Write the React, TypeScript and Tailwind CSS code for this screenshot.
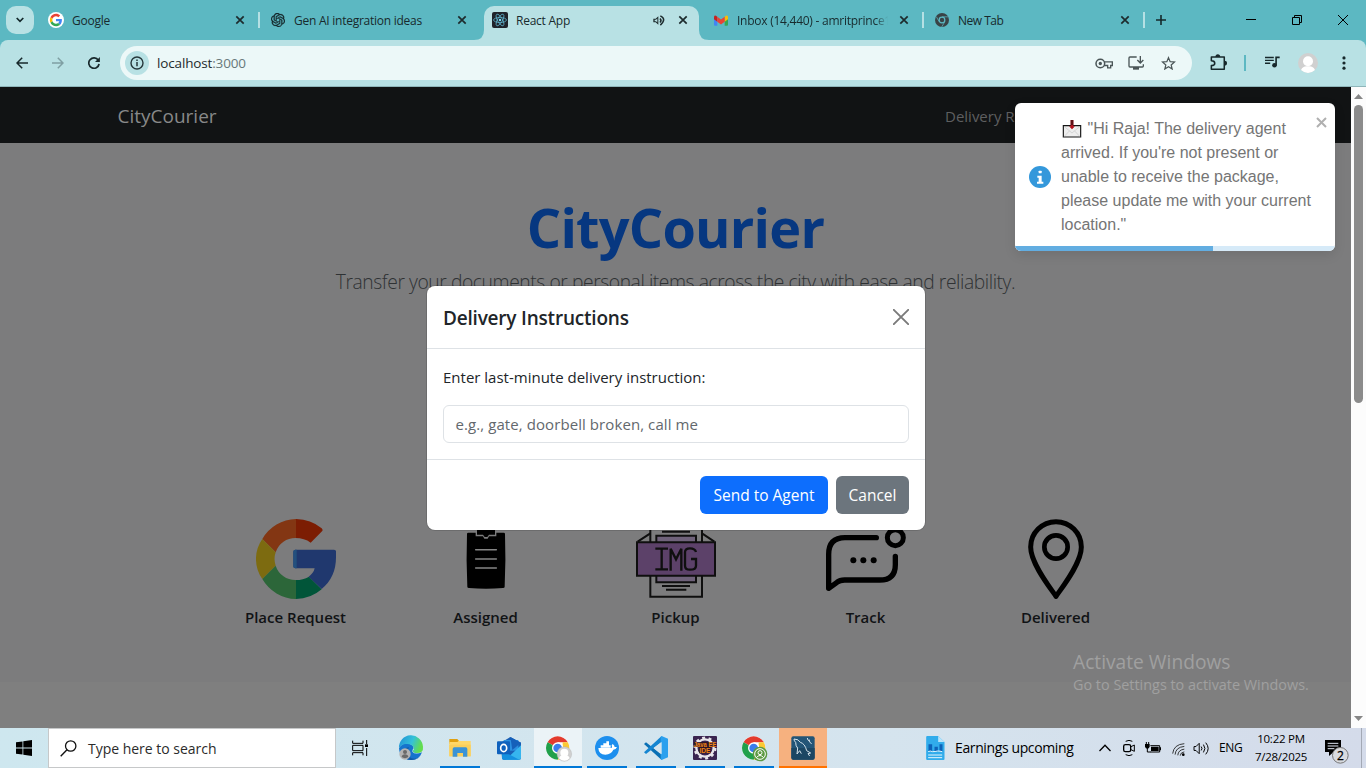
import React from "react";

type PicProps = { box: string; className: string; children: React.ReactNode };
const Pic = ({ box, className, children }: PicProps) => (
  <svg viewBox={box} className={`block shrink-0 ${className}`} fill="none">
    {children}
  </svg>
);

/* ---------- Browser chrome ---------- */

const Close = () => (
  <Pic box="0 0 10 10" className="size-[10px]">
    <path d="M1.3 1.3 8.7 8.7M8.7 1.3 1.3 8.7" stroke="#1d2b2d" strokeWidth="1.7" />
  </Pic>
);

const GoogleIcon = () => (
  <Pic box="0 0 48 48" className="size-4">
    <circle cx="24" cy="24" r="24" fill="#fff" />
    <g transform="translate(5.500 5.500) scale(.77)">
      <path fill="#EA4335" d="M24 9.5c3.54 0 6.71 1.22 9.21 3.6l6.85-6.85C35.9 2.38 30.47 0 24 0 14.62 0 6.51 5.38 2.56 13.22l7.98 6.19C12.43 13.72 17.74 9.5 24 9.5z" />
      <path fill="#4285F4" d="M46.98 24.55c0-1.57-.15-3.09-.38-4.55H24v9.02h12.94c-.58 2.96-2.26 5.48-4.78 7.18l7.73 6c4.51-4.18 7.09-10.36 7.09-17.65z" />
      <path fill="#FBBC05" d="M10.53 28.59c-.48-1.45-.76-2.99-.76-4.59s.27-3.14.76-4.59l-7.98-6.19C.92 16.46 0 20.12 0 24s.92 7.54 2.56 10.78l7.97-6.19z" />
      <path fill="#34A853" d="M24 48c6.48 0 11.93-2.13 15.89-5.81l-7.73-6c-2.15 1.45-4.92 2.3-8.16 2.3-6.26 0-11.57-4.22-13.47-9.91l-7.98 6.19C6.51 42.62 14.62 48 24 48z" />
    </g>
  </Pic>
);

const OpenAiIcon = () => (
  <Pic box="0 0 24 24" className="size-[14px]">
    <path
      fill="#16282b"
      stroke="#16282b"
      strokeWidth=".5"
      d="M22.28 9.82a5.98 5.98 0 0 0-.52-4.91 6.05 6.05 0 0 0-6.51-2.9A6.07 6.07 0 0 0 4.98 4.18a5.98 5.98 0 0 0-4 2.9 6.05 6.05 0 0 0 .74 7.1 5.98 5.98 0 0 0 .51 4.91 6.05 6.05 0 0 0 6.52 2.9A5.98 5.98 0 0 0 13.26 24a6.06 6.06 0 0 0 5.77-4.21 5.99 5.99 0 0 0 4-2.9 6.06 6.06 0 0 0-.75-7.07zM13.26 22.43a4.48 4.48 0 0 1-2.88-1.04l.14-.08 4.78-2.76a.79.79 0 0 0 .39-.68v-6.74l2.02 1.17a.07.07 0 0 1 .04.05v5.58a4.5 4.5 0 0 1-4.49 4.5zM3.6 18.3a4.47 4.47 0 0 1-.54-3.01l.14.08 4.78 2.76a.77.77 0 0 0 .78 0l5.84-3.37v2.33a.08.08 0 0 1-.03.06L9.74 19.95A4.5 4.5 0 0 1 3.6 18.3zM2.34 7.9a4.49 4.49 0 0 1 2.37-1.98v5.68a.77.77 0 0 0 .39.68l5.81 3.35-2.02 1.17a.08.08 0 0 1-.07 0L3.99 14.01A4.5 4.5 0 0 1 2.34 7.87zm16.6 3.86L13.1 8.36l2.02-1.16a.08.08 0 0 1 .07 0l4.83 2.79a4.49 4.49 0 0 1-.68 8.1v-5.68a.79.79 0 0 0-.4-.66zm2.01-3.02-.14-.09-4.77-2.78a.78.78 0 0 0-.79 0L9.41 9.23V6.9a.07.07 0 0 1 .03-.06l4.83-2.79a4.5 4.5 0 0 1 6.68 4.66zM8.31 12.86 6.29 11.7a.08.08 0 0 1-.04-.06V6.07a4.5 4.5 0 0 1 7.38-3.45l-.14.08-4.78 2.76a.79.79 0 0 0-.39.68zm1.1-2.36L12.01 9l2.6 1.5v3l-2.6 1.5-2.6-1.5z"
    />
  </Pic>
);

const ReactIcon = () => (
  <Pic box="0 0 32 32" className="size-4">
    <rect width="32" height="32" rx="4" fill="#20232a" />
    <g stroke="#61b7d0" strokeWidth="1.5">
      <ellipse cx="16" cy="16" rx="13" ry="5" />
      <ellipse cx="16" cy="16" rx="13" ry="5" transform="rotate(60 16 16)" />
      <ellipse cx="16" cy="16" rx="13" ry="5" transform="rotate(120 16 16)" />
    </g>
    <circle cx="16" cy="16" r="2.500" fill="#7adcf8" />
  </Pic>
);

const GmailIcon = () => (
  <Pic box="0 0 42 32" className="h-[11px] w-[14px]">
    <path d="M0 6v23q0 3 3 3h7V13z" fill="#4285f4" />
    <path d="M42 6v23q0 3-3 3h-7V13z" fill="#34a853" />
    <path d="M32 5l4-3q6-3 6 4v6l-10 8z" fill="#fbbc04" />
    <path d="M10 5 6 2Q0-1 0 6v6l10 8z" fill="#c5221f" />
    <path d="M10 5l11 8 11-8v15l-11 8-11-8z" fill="#ea4335" />
  </Pic>
);

const ChromeGray = () => (
  <Pic box="0 0 42 42" className="size-[14px]">
    <circle cx="21" cy="21" r="21" fill="#394346" />
    <circle cx="21" cy="21" r="8.500" fill="#394346" stroke="#5cb8c2" strokeWidth="3.600" />
    <path d="M21 11.500h19M12.500 26 4 11M29.500 26 20 42" stroke="#5cb8c2" strokeWidth="2.200" />
  </Pic>
);

const Sep = ({ className }: { className: string }) => (
  <div className={`absolute top-3 h-4 w-[2px] bg-[#b5e0e4] ${className}`} />
);

const tabText = "pt-[2px] text-[12px] leading-4 tracking-[-0.25px] whitespace-nowrap text-[#182a2d]";

const TabStrip = () => (
  <div className="flex h-10 shrink-0 bg-[#5cb8c2]">
    <div className="flex w-[39px] shrink-0 items-center pl-[6px]">
      <div className="flex size-7 items-center justify-center rounded-[10px] bg-[#b8e1e4]">
        <Pic box="0 0 8 6" className="h-[6px] w-2">
          <path d="M.7 1 4 4.300 7.300 1" stroke="#14282b" strokeWidth="1.700" />
        </Pic>
      </div>
    </div>
    <div className="relative flex w-[221px] shrink-0 items-center pr-[15px] pl-[9px]">
      <GoogleIcon />
      <span className={`ml-2 flex-1 ${tabText}`}>Google</span>
      <Close />
      <Sep className="right-0" />
    </div>
    <div className="flex w-[221px] shrink-0 items-center pr-[14px] pl-[11px]">
      <OpenAiIcon />
      <span className={`ml-[9px] flex-1 ${tabText}`}>Gen AI integration ideas</span>
      <Close />
    </div>
    <div className="relative w-[221px] shrink-0 pt-[6px] pl-[3px]">
      <div className="relative flex h-[34px] w-[215px] items-center rounded-t-[10px] bg-[#b8e1e4] pr-[11px] pb-[6px] pl-2">
        <ReactIcon />
        <span className={`ml-2 flex-1 ${tabText}`}>React App</span>
        <Pic box="0 0 36 32" className="mr-[13px] h-[11px] w-3">
          <path d="M1 11h7l8-8v26l-8-8H1z" fill="#1d2b2d" />
          <path d="M5 14h4l4-4v12l-4-4H5z" fill="#b8e1e4" />
          <path d="M21 10q6 6 0 12M22 2q20 10 0 28" stroke="#1d2b2d" strokeWidth="4.500" />
        </Pic>
        <Close />
        <Pic box="0 0 10 10" className="absolute bottom-0 -left-[10px] size-[10px]">
          <path d="M10 0v10H0Q10 10 10 0z" fill="#b8e1e4" />
        </Pic>
        <Pic box="0 0 10 10" className="absolute -right-[10px] bottom-0 size-[10px]">
          <path d="M0 0v10h10Q0 10 0 0z" fill="#b8e1e4" />
        </Pic>
      </div>
    </div>
    <div className="flex w-[221px] shrink-0 items-center pr-[14px] pl-3">
      <GmailIcon />
      <span className={`mr-[7px] ml-[9px] w-[155px] [mask-image:linear-gradient(to_right,#000_138px,transparent_151px)] ${tabText}`}>
        Inbox (14,440) - amritprince1
      </span>
      <Close />
    </div>
    <div className="relative flex w-[222px] shrink-0 items-center pr-[15px] pl-3">
      <Sep className="-left-px" />
      <ChromeGray />
      <span className="ml-[9px] flex-1 pt-[2px] text-[12px] leading-4 tracking-[-0.5px] whitespace-nowrap text-[#182a2d]">New Tab</span>
      <Close />
      <Sep className="right-0" />
    </div>
    <div className="flex flex-1 items-center pl-[11px]">
      <Pic box="0 0 10 10" className="size-[10px]">
        <path d="M5 0v10M0 5h10" stroke="#14282b" strokeWidth="1.600" />
      </Pic>
    </div>
    <div className="flex w-[138px] shrink-0 items-center justify-around">
      <Pic box="0 0 10 10" className="size-[10px]">
        <path d="M0 4.500h10" stroke="#000" />
      </Pic>
      <Pic box="0 0 10 10" className="size-[10px]">
        <path d="M.5 2.500h7v7h-7zM2.500 2.500v-2h7v7h-2" stroke="#000" />
      </Pic>
      <Pic box="0 0 10 10" className="size-[10px]">
        <path d="M0 0 10 10M10 0 0 10" stroke="#000" />
      </Pic>
    </div>
  </div>
);

const Toolbar = () => (
  <div className="h-[47px] shrink-0 bg-[#5cb8c2]">
    <div className="flex h-[47px] items-start rounded-t-[8px] border-b border-[#8fb6ba] bg-[#b8e1e4] pt-[6px]">
      <div className="flex h-[34px] w-[120px] shrink-0 items-center pl-4">
        <Pic box="0 0 12 12" className="size-3">
          <path d="M12 6H1M6.200.8 1 6l5.200 5.200" stroke="#17282b" strokeWidth="1.500" />
        </Pic>
        <Pic box="0 0 12 12" className="ml-6 size-3">
          <path d="M0 6h11M5.800.8 11 6l-5.200 5.200" stroke="#7f9fa3" strokeWidth="1.500" />
        </Pic>
        <Pic box="0 0 12 12" className="ml-6 size-3">
          <path d="M10.300 3.200A5.200 5.200 0 1 0 11.100 7" stroke="#17282b" strokeWidth="1.700" />
          <path d="M11.900 0v4.900H7z" fill="#17282b" />
        </Pic>
      </div>
      <div className="flex h-[34px] w-[1072px] shrink-0 items-center rounded-full bg-[#ecf8f8] pr-4 pl-[5px]">
        <div className="flex size-6 items-center justify-center rounded-full bg-[#b8e1e4]">
          <Pic box="0 0 14 14" className="size-[14px]">
            <circle cx="7" cy="7" r="6" stroke="#26383b" strokeWidth="1.400" />
            <path d="M7 6v4.300M7 3.500v1.500" stroke="#26383b" strokeWidth="1.500" />
          </Pic>
        </div>
        <span className="ml-2 flex-1 text-[13.500px] leading-5 tracking-[-0.15px] text-[#1f2b2d]">
          localhost<span className="text-[#68787a]">:3000</span>
        </span>
        <Pic box="0 0 54 32" className="h-[11px] w-[18px]">
          <circle cx="16" cy="16" r="13" stroke="#4a5557" strokeWidth="4.500" />
          <circle cx="16" cy="16" r="5" fill="#4a5557" />
          <path d="M28 11h24v11h-5v7h-9v-7H28" stroke="#4a5557" strokeWidth="4" />
        </Pic>
        <Pic box="0 0 48 42" className="ml-[15px] h-[14px] w-4">
          <path d="M26 3H6q-3 0-3 3v24q0 3 3 3h37q3 0 3-3v-5" stroke="#4a5557" strokeWidth="4" />
          <path d="M15 33h18v8H15z" fill="#4a5557" />
          <path d="M37 0v19M28 12l9 9 9-9" stroke="#4a5557" strokeWidth="4" />
        </Pic>
        <Pic box="0 0 44 42" className="ml-[17px] h-[14px] w-[15px]">
          <path d="M22 5l5 12 13 1-10 9 3 12-11-7-11 7 3-12-10-9 13-1z" stroke="#4a5557" strokeWidth="3.600" />
        </Pic>
      </div>
      <div className="flex h-[34px] flex-1 items-center pl-[18px]">
        <Pic box="0 0 50 50" className="mb-[1px] size-[17px]">
          <path d="M4 9h38v36H4V34q10 0 10-7T4 20z" stroke="#17282b" strokeWidth="4.500" strokeLinejoin="round" />
          <path d="M16 9q0-8 7-8t7 8zM42 20q8 0 8 7t-8 7z" fill="#17282b" />
        </Pic>
        <div className="ml-[17px] h-4 w-[2px] bg-[#5cb8c2]" />
        <Pic box="0 0 46 34" className="mb-[2px] ml-[19px] h-3 w-[15px]">
          <path d="M0 3h27M0 12h27M0 21h16" stroke="#17282b" strokeWidth="4.500" />
          <path d="M34 28V3h11" stroke="#17282b" strokeWidth="5" />
          <circle cx="29" cy="27" r="7" fill="#17282b" />
        </Pic>
        <Pic box="0 0 60 60" className="ml-[18px] size-5">
          <circle cx="30" cy="30" r="30" fill="#d0d0d0" />
          <circle cx="30" cy="25" r="15" fill="#fff" />
          <path d="M9 51q6-13 21-11 15-2 21 11-10 9-21 9T9 51z" fill="#fff" />
        </Pic>
        <Pic box="0 0 4 14" className="ml-[24px] h-[14px] w-1">
          <g fill="#17282b">
            <circle cx="2" cy="1.900" r="1.600" />
            <circle cx="2" cy="7" r="1.600" />
            <circle cx="2" cy="12.200" r="1.600" />
          </g>
        </Pic>
      </div>
    </div>
  </div>
);

/* ---------- Page ---------- */

const steps = [
  {
    label: "Place Request",
    art: (
      <Pic box="78 57 240 240" className="size-20">
        <path d="M197 57a120 120 0 0 1 78 28q5 5 1 9l-34 34q-19-14-45-14z" fill="#7c1d03" />
        <path d="M97 117a120 120 0 0 1 101-60v57a62 62 0 0 0-61 43z" fill="#833613" />
        <path d="M97 117a104 104 0 0 0 0 120l40-40a62 62 0 0 1 0-40z" fill="#7d6b10" />
        <path d="M97 237a120 120 0 0 0 101 60v-57a62 62 0 0 1-61-43z" fill="#2c6639" />
        <path d="M198 297a120 120 0 0 0 77-29l-38-38q-18 10-39 10z" fill="#015539" />
        <path d="M275 267q43-35 43-95v-18q0-5-6-5H196q-6 0-6 6v44q0 6 6 6h58q-3 14-18 25z" fill="#20386e" />
        <path d="M190 155q0-6 6-6h4v56h-4q-6 0-6-6z" fill="#23507e" />
      </Pic>
    ),
  },
  {
    label: "Assigned",
    art: (
      <Pic box="648 57 240 240" className="size-20">
        <path d="M715 98h22v11h22l4 7h10l4-7h22V98h22q4 0 4 4 3 80-1 158 0 4-5 4-51 4-102 0-5 0-5-4-4-78-1-158 0-4 4-4z" fill="#000" />
        <path d="M741 80h54v24h-18l-5 7h-8l-5-7h-18z" fill="#000" />
        <path d="M737 149h62M737 177h62M737 204h62" stroke="#858585" strokeWidth="4.500" strokeLinecap="round" />
      </Pic>
    ),
  },
  {
    label: "Pickup",
    art: (
      <Pic box="108 57 240 240" className="size-20">
        <g stroke="#0f0f0f" strokeWidth="6">
          <path d="M151 70v220h155V70" />
          <path d="M113 125l38-25M343 125l-37-25" />
          <path d="M169 126v-19h119v19M169 228v19h119v-19" fill="#6f627a" />
          <path d="M186 95h84M186 258h84M198 269h61" />
          <path d="M111 127h234v100H111z" fill="#5c4169" />
          <path d="M166 146h38M185 146v62M166 208h38M212 212v-66l16 32 16-32v66M288 156q-3-11-18-11-15 0-15 12v40q0 12 15 12 18 0 18-12v-20h-15" strokeWidth="7" />
        </g>
      </Pic>
    ),
  },
  {
    label: "Track",
    art: (
      <Pic box="678 57 240 240" className="size-20">
        <path d="M829 113H735q-49 0-49 50v102l25-18q8-7 23-7h105q47 0 47-46v-25" stroke="#000" strokeWidth="16" strokeLinecap="round" strokeLinejoin="round" />
        <circle cx="886" cy="113" r="24" stroke="#000" strokeWidth="15" />
        <g fill="#000">
          <circle cx="760" cy="181" r="9" />
          <circle cx="790" cy="181" r="9" />
          <circle cx="821" cy="181" r="9" />
        </g>
      </Pic>
    ),
  },
  {
    label: "Delivered",
    art: (
      <Pic box="1248 57 240 240" className="size-20">
        <path d="M1368 289c-16-24-76-98-76-148a76 76 0 0 1 152 0c0 50-60 124-76 148z" stroke="#000" strokeWidth="15" strokeLinejoin="round" />
        <circle cx="1368" cy="141" r="35" stroke="#000" strokeWidth="14" />
      </Pic>
    ),
  },
];

const Modal = () => (
  <div className="absolute top-[199px] left-[427px] flex h-[244px] w-[498px] flex-col rounded-[8px] bg-white text-[#212529] shadow-[0_0_0_1px_rgba(0,0,0,0.12)]">
    <div className="flex h-[63px] shrink-0 items-center border-b border-[#dee2e6] px-4">
      <h5 className="flex-1 pt-[2px] text-[19px] leading-[30px] font-semibold tracking-[-0.2px]">Delivery Instructions</h5>
      <Pic box="0 0 16 16" className="size-4">
        <path d="M.8.8l14.400 14.400M15.200.8.8 15.200" stroke="#7a7a7a" strokeWidth="1.900" strokeLinecap="round" />
      </Pic>
    </div>
    <div className="flex h-[111px] shrink-0 flex-col border-b border-[#dee2e6] px-4 pt-4">
      <label className="text-[15px] leading-6">Enter last-minute delivery instruction:</label>
      <div className="mt-4 flex h-[38px] items-center rounded-[6px] border border-[#dee2e6] px-[11.500px] text-[15px] tracking-[0.080px] text-[#63686d]">
        e.g., gate, doorbell broken, call me
      </div>
    </div>
    <div className="flex flex-1 items-center justify-end gap-2 px-4 text-[15.500px] text-white">
      <button className="h-[38px] w-32 rounded-[6px] bg-[#0d6efd] pt-[2px] whitespace-nowrap">Send to Agent</button>
      <button className="h-[38px] w-[73px] rounded-[6px] bg-[#6c757d] pt-[2px] whitespace-nowrap">Cancel</button>
    </div>
  </div>
);

const Toast = () => (
  <div className="absolute top-4 left-[1015px] flex h-[148px] w-80 flex-col overflow-hidden rounded-[6px] bg-white font-['Liberation_Sans',Arial,sans-serif] shadow-[0_4px_12px_rgba(0,0,0,0.1)]">
    <div className="flex flex-1 pl-[14px]">
      <Pic box="0 0 66 66" className="mt-[63px] size-[22px]">
        <circle cx="33" cy="33" r="33" fill="#3498db" />
        <rect x="29" y="14" width="9" height="8" rx="2" fill="#fff" />
        <path d="M25 29h13v18h5v6H24v-6h5V35h-4z" fill="#fff" />
      </Pic>
      <p className="mt-[14px] ml-[10px] text-[16px] leading-6 whitespace-nowrap text-[#757575]">
        <svg viewBox="0 0 60 54" className="mr-px ml-px inline-block h-[18px] w-[20px] align-[-4px]">
          <path d="M4 17h52v34H4z" fill="#eee" stroke="#161616" strokeWidth="3.500" />
          <path d="M7 20l23 19 23-19M7 49l16-17M53 49 37 32" fill="none" stroke="#c8c8c8" strokeWidth="2" />
          <path d="M26 0h8v19h5l-9 9-9-9h5z" fill="#b3111c" />
          <path d="M26 0h8v15h-8z" fill="#5d1015" />
        </svg>
        {" \"Hi Raja! The delivery agent"}
        <br />
        arrived. If you're not present or
        <br />
        unable to receive the package,
        <br />
        please update me with your current
        <br />
        location."
      </p>
      <Pic box="0 0 11 11" className="mt-[14px] ml-[5px] size-[11px]">
        <path d="M1 1l9 9M10 1l-9 9" stroke="#b0b0b0" strokeWidth="2" />
      </Pic>
    </div>
    <div className="h-[5px] shrink-0 bg-[#d6eaf8]">
      <div className="h-full w-[198px] bg-[#62ade1]" />
    </div>
  </div>
);

const Page = () => (
  <div className="relative flex h-[641px] shrink-0">
    <main className="flex w-[1351px] shrink-0 flex-col bg-[#7f7f7f]">
      <nav className="flex h-14 shrink-0 items-center bg-[#111314] pt-[2px] pl-[117.500px] text-[#888989]">
        <span className="w-[827.500px] text-[19px]">CityCourier</span>
        <span className="text-[15px] text-[#5e5f60]">Delivery R</span>
      </nav>
      <section className="flex h-[539px] shrink-0 flex-col items-center bg-[#7c7c7d] pt-[50px]">
        <h1 className="text-[54px] leading-[68px] font-bold tracking-[-0.750px] text-[#063780]">CityCourier</h1>
        <p className="mt-[6px] text-[19.300px] leading-[30px] font-light tracking-[-0.430px] whitespace-nowrap text-[#2f3234]">
          Transfer your documents or personal items across the city with ease and reliability.
        </p>
        <div className="mt-[222px] flex">
          {steps.map((s) => (
            <div key={s.label} className="flex w-[190px] flex-col items-center">
              {s.art}
              <span className="mt-[6px] text-[15px] leading-6 font-semibold text-[#111315]">{s.label}</span>
            </div>
          ))}
        </div>
      </section>
    </main>
    <div className="flex flex-1 flex-col items-center justify-between bg-[#fcfcfc] py-[7px]">
      <Pic box="0 0 9 5" className="h-[5px] w-[9px]">
        <path d="M4.500 0 9 5H0z" fill="#868686" />
      </Pic>
      <div className="mt-[6px] h-[298px] w-[9px] rounded-full bg-[#8b8b8b]" />
      <div className="flex-1" />
      <Pic box="0 0 9 5" className="h-[5px] w-[9px]">
        <path d="M4.500 5 9 0H0z" fill="#868686" />
      </Pic>
    </div>
    <Modal />
    <Toast />
    <div className="absolute top-[562px] left-[1073px] whitespace-nowrap text-[#a0a0a0]">
      <div className="text-[19.200px] leading-[25px]">Activate Windows</div>
      <div className="pt-px text-[14.400px] leading-5">Go to Settings to activate Windows.</div>
    </div>
  </div>
);

/* ---------- Taskbar ---------- */

const ChromeArt = () => (
  <>
    <circle cx="35" cy="36" r="35" fill="#fff" />
    <path d="M35 36 4.700 18.500A35 35 0 0 1 65.300 18.500L66 19H35z" fill="#e33b2e" />
    <path d="M4.700 18.500A35 35 0 0 0 35 71l15-27-15-8z" fill="#21a04b" />
    <path d="M65.600 19A35 35 0 0 1 35 71l15-27V19z" fill="#fcc934" />
    <circle cx="35" cy="36" r="17" fill="#fff" />
    <circle cx="35" cy="36" r="13" fill="#3b7ded" />
  </>
);

const apps = [
  {
    slot: "",
    bar: "",
    art: (
      <>
        <defs>
          <linearGradient id="edgeTop" x1="0" y1="0" x2="1" y2=".3">
            <stop offset="0" stopColor="#1f8fd6" />
            <stop offset=".6" stopColor="#35c1d8" />
            <stop offset="1" stopColor="#63dd4f" />
          </linearGradient>
        </defs>
        <path d="M0 36q10-16 30-13 14 3 14 14-4 3-4 10 8 10 29 2-8 23-33 23Q2 70 0 36z" fill="#1574cd" />
        <path d="M30 34q-8 14 0 27 12 14 32 2-10 9-26 9-24-2-25-22 3-14 19-16z" fill="#1259a4" />
        <path d="M0 36A36 36 0 0 1 72 32q2 20-20 19-10 0-11-6 6-5 3-11Q37 22 20 24 7 25 0 36z" fill="url(#edgeTop)" />
        <circle cx="18" cy="54" r="17" fill="#b3b3b3" />
        <circle cx="18" cy="48" r="6" fill="#6a6a6a" />
        <path d="M8 63q1-8 10-8t10 8q-10 7-20 0z" fill="#6a6a6a" />
      </>
    ),
  },
  {
    slot: "",
    bar: "w-10 bg-[#0078d7]",
    art: (
      <>
        <path d="M4 9h24l5 6v8H4z" fill="#e0a010" />
        <path d="M4 18h24l4-3h36v46H4z" fill="#ffd768" />
        <path d="M4 26h64v35H4z" fill="#fbcf5a" />
        <path d="M14 62V39q0-5 5-5h34q5 0 5 5v23H45V51H28v11z" fill="#3a93d6" />
      </>
    ),
  },
  {
    slot: "",
    bar: "",
    art: (
      <>
        <path d="M11 20 40 3l32 17v46q0 5-5 5H20q-5 0-5-5z" fill="#1a5fb4" />
        <path d="M20 12h44v32H20z" fill="#2b8fe0" />
        <path d="M40 3 72 20 46 42z" fill="#1560ba" />
        <path d="M72 28v38q0 5-5 5H26z" fill="#36b5ee" />
        <path d="M15 44l52 27H20q-5 0-5-5z" fill="#1490df" />
        <rect y="16" width="39" height="39" rx="3" fill="#0f61bd" />
        <ellipse cx="20" cy="36" rx="9" ry="11" stroke="#fff" strokeWidth="5" />
      </>
    ),
  },
  {
    slot: "bg-[#ebf3f7]",
    bar: "w-12 bg-[#0078d7]",
    art: (
      <>
        <ChromeArt />
        <circle cx="55" cy="54" r="22" fill="#d0d0d0" stroke="#aaa" />
        <circle cx="55" cy="50" r="12" fill="#fff" />
        <path d="M39 67q3-10 16-10t16 10q-15 15-32 0z" fill="#fff" />
      </>
    ),
  },
  {
    slot: "",
    bar: "w-10 bg-[#0078d7]",
    art: (
      <>
        <circle cx="36" cy="36" r="36" fill="#1d8fee" />
        <path d="M10 36h40q2-5 0-8l3-4q6 4 6 9h7q-3 8-11 8-6 14-24 15-20 0-21-20z" fill="#fff" />
        <path d="M17 28h30v7H17zM25 22h17v6H25zM34 16h8v6h-8z" fill="#fff" />
      </>
    ),
  },
  {
    slot: "",
    bar: "w-10 bg-[#0078d7]",
    art: (
      <>
        <path d="M0 24l6-5 47 37v16z" fill="#0a70b5" />
        <path d="M0 49l6 5L53 17V0z" fill="#1485d1" />
        <path d="M53 0l19 8v56l-19 8-3-3V3z" fill="#2ba0ee" />
        <path d="M53 18v37L29 36z" fill="#d4e4ee" />
      </>
    ),
  },
  {
    slot: "",
    bar: "w-10 bg-[#0078d7]",
    art: (
      <>
        <rect width="72" height="72" rx="3" fill="#3a2450" />
        <circle cx="36" cy="36" r="26" stroke="#e9e6ea" strokeWidth="7" />
        <circle cx="36" cy="36" r="31" stroke="#e9e6ea" strokeWidth="7" strokeDasharray="9 10.500" />
        <path d="M3 18h66v15H3zM18 33h36v19H18z" fill="#2b1420" fillOpacity=".85" />
        <g fontFamily="Liberation Sans" fontWeight="bold" fill="#ef8318" textAnchor="middle">
          <text x="36" y="33" fontSize="20" textLength="68" lengthAdjust="spacingAndGlyphs">Java EE</text>
          <text x="36" y="51" fontSize="20">IDE</text>
        </g>
      </>
    ),
  },
  {
    slot: "",
    bar: "w-10 bg-[#0078d7]",
    art: (
      <>
        <ChromeArt />
        <circle cx="54" cy="54" r="22" fill="#5c9a42" />
        <circle cx="54" cy="54" r="16" stroke="#fff" strokeWidth="3" />
        <circle cx="54" cy="50" r="6" stroke="#fff" strokeWidth="3" />
        <path d="M43 65q11-13 22 0" stroke="#fff" strokeWidth="3" />
      </>
    ),
  },
  {
    slot: "bg-[#f6b17f]",
    bar: "w-12 bg-[#ff7200]",
    art: (
      <>
        <rect width="70" height="70" x="1" y="1" rx="6" fill="#235577" />
        <path d="M1 36h70v29q0 6-6 6H7q-6 0-6-6z" fill="#1b4663" />
        <path d="M9 9q14 0 19 10 14 4 19 25l12 7-8 2 5 7M9 9q0 6 5 10 0 12 6 17l-2 18 8-10 5 9" stroke="#d5e2ea" strokeWidth="3" />
        <path d="M49 6q0 7 6 8 0 6 7 9M52 14l5-2" stroke="#d5e2ea" strokeWidth="3" />
      </>
    ),
  },
];

const Taskbar = () => (
  <div className="flex h-10 shrink-0 bg-linear-to-r from-[#cee7ef] via-[#d5e4ee] via-65% to-[#d4dbea] text-black">
    <div className="flex w-12 shrink-0 items-center justify-center">
      <Pic box="0 0 16 16" className="size-4">
        <path d="M0 2.300l6.500-.9v6.200H0zM7.300 1.300 16 0v7.600H7.300zM0 8.400h6.500v6.200L0 13.700zM7.300 8.400H16V16l-8.700-1.300z" fill="#000" />
      </Pic>
    </div>
    <div className="flex w-72 shrink-0 items-center border border-[#c6c8c9] bg-white pl-[11px]">
      <Pic box="0 0 17 17" className="size-[17px]">
        <circle cx="10.700" cy="6" r="5.200" stroke="#111" strokeWidth="1.300" />
        <path d="M7 9.800.7 16.200" stroke="#111" strokeWidth="1.400" />
      </Pic>
      <span className="ml-[11px] pt-[2px] text-[14px] leading-5 tracking-[-0.02px] text-[#2b2b2b]">Type here to search</span>
    </div>
    <div className="flex w-[51px] shrink-0 items-center justify-center pr-[3px]">
      <Pic box="0 0 48 48" className="size-4">
        <path d="M2 2v8h31V2M2 46v-8h31v8M2 16h31v16H2zM44 0v12M44 24v24" stroke="#000" strokeWidth="3" />
        <path d="M39 13h9v8h-9z" fill="#000" />
      </Pic>
    </div>
    <div className="flex shrink-0 gap-px">
      {apps.map((a, i) => (
        <div key={i} className={`relative flex w-12 items-center justify-center ${a.slot}`}>
          <Pic box="0 0 72 72" className="size-6 overflow-visible">{a.art}</Pic>
          <div className={`absolute bottom-0 h-[2px] ${a.bar}`} />
        </div>
      ))}
    </div>
    <div className="flex flex-1 items-center pl-[99px]">
      <Pic box="0 0 56 72" className="h-6 w-[19px]">
        <path d="M0 3q0-3 3-3h33l19 18v51q0 3-3 3H3q-3 0-3-3z" fill="#31aceb" />
        <path d="M36 0l19 18H36z" fill="#b8e4fb" />
        <path d="M7 25h11v20H7zM25 32h10v13H25zM40 25h9v20h-9z" fill="#0d62b8" />
        <path d="M6 47q6-4 13 0 8 0 15-2 8 0 14 2M6 57h42M6 65h42" stroke="#e3f5fd" strokeWidth="3" />
      </Pic>
      <span className="ml-[10px] w-[144px] text-[14px] leading-5 tracking-[-0.380px] whitespace-nowrap">Earnings upcoming</span>
      <Pic box="0 0 12 8" className="h-2 w-3">
        <path d="M.5 7 6 1.300 11.500 7" stroke="#000" strokeWidth="1.300" />
      </Pic>
      <Pic box="0 0 36 48" className="ml-3 h-4 w-3">
        <path d="M8 4q10-6 20 0M8 44q10 6 20 0" stroke="#000" strokeWidth="3" />
        <rect x="2" y="14" width="21" height="21" rx="5" stroke="#000" strokeWidth="4" />
        <path d="M24 20l10-5v19l-10-5" stroke="#000" strokeWidth="3" />
      </Pic>
      <Pic box="0 0 48 36" className="mb-[1px] ml-[10px] h-3 w-4">
        <path d="M16 11h28v19H16" stroke="#000" strokeWidth="3" />
        <path d="M18 14h23v13H18zM45 16h3v9h-3zM0 6h14v8q-2 6-7 6t-7-6z" fill="#000" />
        <path d="M4 0v7M11 0v7M7 18v12h10" stroke="#000" strokeWidth="3" />
      </Pic>
      <Pic box="0 0 38 38" className="mt-[3px] ml-[11px] h-[13px] w-[13px]">
        <path d="M2 31Q5 4 36 2M9 34Q11 12 36 10M17 36Q18 20 36 18M24 37Q25 27 36 26" stroke="#222" strokeWidth="2.600" />
        <circle cx="33" cy="34" r="4" fill="#000" />
      </Pic>
      <Pic box="0 0 50 40" className="ml-[8px] h-[13px] w-[17px]">
        <path d="M2 14h6L18 4v32L8 26H2zM24 14q5 6 0 12M31 8q9 12 0 24M38 2q15 18 0 36" stroke="#000" strokeWidth="3" />
      </Pic>
      <span className="ml-[9px] w-[32px] text-[12px] tracking-[-0.4px] whitespace-nowrap">ENG</span>
      <div className="flex w-[60px] flex-col items-center text-[11.500px] leading-[18px] tracking-[-0.250px] whitespace-nowrap">
        <span>10:22 PM</span>
        <span>7/28/2025</span>
      </div>
      <div className="mt-[6px] ml-[14px] h-[26px] w-6">
        <Pic box="0 0 72 78" className="h-[26px] w-6">
          <path d="M0 6h48v36H26L12 54V42H0z" fill="#000" />
          <path d="M8 16h32M8 24h32M8 32h20" stroke="#dde3ee" strokeWidth="3" />
          <circle cx="46" cy="52" r="23.500" fill="#d9dbdf" stroke="#777" strokeWidth="3" />
          <text x="46" y="65" fontSize="36" textAnchor="middle" fill="#000" stroke="#000" strokeWidth=".8" fontFamily="Open Sans">2</text>
        </Pic>
      </div>
    </div>
    <div className="w-[5px] shrink-0 border-l border-[#a3a9b5]" />
  </div>
);

export default function App() {
  return (
    <div className="flex h-[768px] w-[1366px] flex-col overflow-hidden font-['Open_Sans','Noto_Sans',sans-serif]">
      <TabStrip />
      <Toolbar />
      <Page />
      <Taskbar />
    </div>
  );
}
